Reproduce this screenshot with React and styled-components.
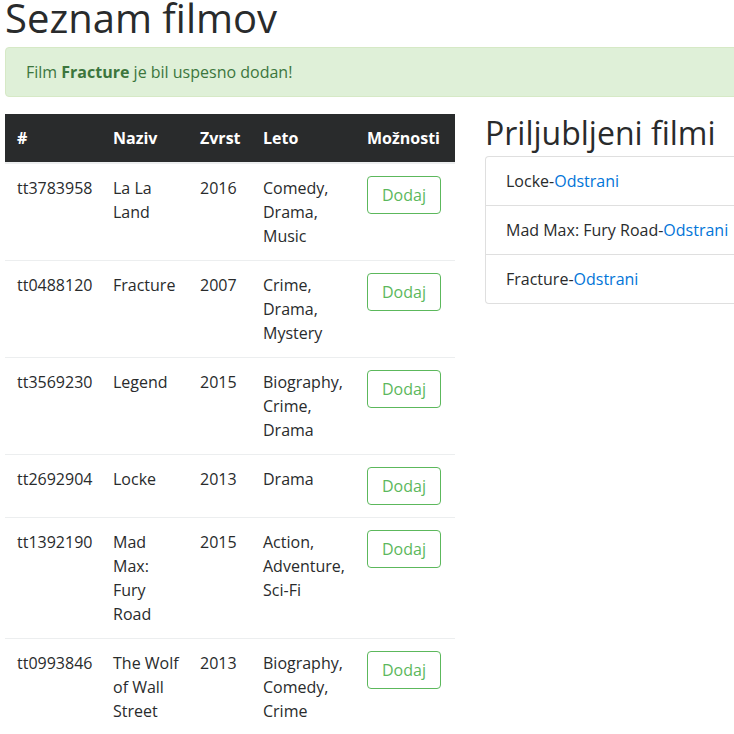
import React from "react";
import styled, { createGlobalStyle } from "styled-components";

const GlobalStyle = createGlobalStyle`
  html, body {
    margin: 0;
    padding: 0;
    overflow: hidden;
    background: #fff;
  }
  body {
    font-family: "Open Sans", "Noto Sans", sans-serif;
    font-size: 16px;
    line-height: 1.5;
    color: #292b2c;
  }
`;

const movies = [
  { id: "tt3783958", title: "La La Land", year: 2016, genre: "Comedy, Drama, Music" },
  { id: "tt0488120", title: "Fracture", year: 2007, genre: "Crime, Drama, Mystery" },
  { id: "tt3569230", title: "Legend", year: 2015, genre: "Biography, Crime, Drama" },
  { id: "tt2692904", title: "Locke", year: 2013, genre: "Drama" },
  { id: "tt1392190", title: "Mad Max: Fury Road", year: 2015, genre: "Action, Adventure, Sci-Fi" },
  { id: "tt0993846", title: "The Wolf of Wall Street", year: 2013, genre: "Biography, Comedy, Crime" },
];

const favourites = ["Locke", "Mad Max: Fury Road", "Fracture"];

function App() {
  return (
    <>
      <GlobalStyle />
      <Page>
        <Title>Seznam filmov</Title>
        <Alert>
          Film <strong>Fracture</strong> je bil uspesno dodan!
        </Alert>
        <Row>
          <Table>
            <colgroup>
              <col style={{ width: 96 }} />
              <col style={{ width: 87 }} />
              <col style={{ width: 63 }} />
              <col style={{ width: 104 }} />
              <col style={{ width: 100 }} />
            </colgroup>
            <thead>
              <tr>
                <Th>#</Th>
                <Th>Naziv</Th>
                <Th>Zvrst</Th>
                <Th>Leto</Th>
                <Th>Možnosti</Th>
              </tr>
            </thead>
            <tbody>
              {movies.map((m) => (
                <tr key={m.id}>
                  <Td>{m.id}</Td>
                  <Td>{m.title}</Td>
                  <Td>{m.year}</Td>
                  <Td>{m.genre}</Td>
                  <Td>
                    <AddButton>Dodaj</AddButton>
                  </Td>
                </tr>
              ))}
            </tbody>
          </Table>
          <Favourites>
            <SubTitle>Priljubljeni filmi</SubTitle>
            <ListGroup>
              {favourites.map((f) => (
                <ListItem key={f}>
                  {f}-<RemoveLink href="#">Odstrani</RemoveLink>
                </ListItem>
              ))}
            </ListGroup>
          </Favourites>
        </Row>
      </Page>
    </>
  );
}

const Page = styled.div`
  width: 930px;
  padding-left: 5px;
`;

const Title = styled.h1`
  margin: 0 0 11px;
  font-size: 40px;
  font-weight: 500;
  line-height: 36px;
  color: #292b2c;
`;

const Alert = styled.div`
  padding: 12px 20px;
  margin-bottom: 17px;
  border: 1px solid #d6e9c6;
  border-radius: 4px;
  background: #dff0d8;
  color: #3c763d;

  strong {
    font-weight: 700;
  }
`;

const Row = styled.div`
  display: grid;
  grid-template-columns: 450px 450px;
  column-gap: 30px;
  align-items: start;
`;

const Table = styled.table`
  width: 450px;
  table-layout: fixed;
  border-collapse: collapse;
`;

const Th = styled.th`
  padding: 12px 6px 12px 12px;
  text-align: left;
  vertical-align: bottom;
  font-weight: 700;
  color: #fff;
  background: #292b2c;
  border-bottom: 2px solid #eceeef;
`;

const Td = styled.td`
  padding: 12px 8px 12px 12px;
  vertical-align: top;
  border-top: 1px solid #eceeef;

  tr:first-child > & {
    border-top: none;
  }
`;

const AddButton = styled.button`
  padding: 8px 14px;
  font-family: inherit;
  font-size: 16px;
  line-height: 1.25;
  color: #5cb85c;
  background: transparent;
  border: 1px solid #5cb85c;
  border-radius: 4px;
  cursor: pointer;
`;

const Favourites = styled.div`
  display: flex;
  flex-direction: column;
`;

const SubTitle = styled.h2`
  margin: 0 0 4px;
  font-size: 32px;
  font-weight: 500;
  line-height: 1.2;
  color: #292b2c;
`;

const ListGroup = styled.ul`
  margin: 0;
  padding: 0;
  list-style: none;
`;

const ListItem = styled.li`
  padding: 12px 20px;
  margin-bottom: -1px;
  border: 1px solid rgba(0, 0, 0, 0.125);
  background: #fff;

  &:first-child {
    border-top-left-radius: 4px;
    border-top-right-radius: 4px;
  }
  &:last-child {
    margin-bottom: 0;
    border-bottom-left-radius: 4px;
    border-bottom-right-radius: 4px;
  }
`;

const RemoveLink = styled.a`
  color: #0275d8;
  text-decoration: none;
`;

export default App;
